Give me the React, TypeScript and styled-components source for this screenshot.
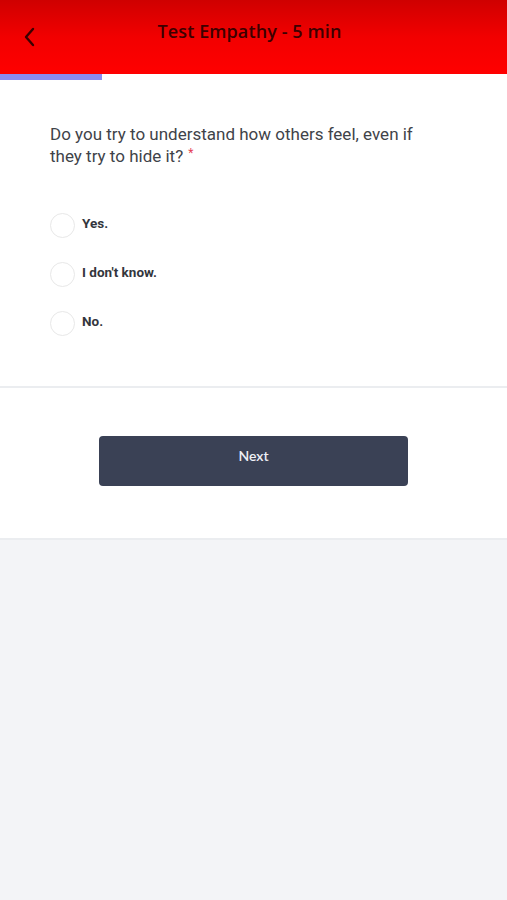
import styled, { createGlobalStyle } from "styled-components";

const GlobalStyle = createGlobalStyle`
  body {
    margin: 0;
    background: #f3f4f7;
    font-family: Roboto, "Liberation Sans", sans-serif;
  }
`;

const options = ["Yes.", "I don't know.", "No."];

export default function App() {
  return (
    <>
      <GlobalStyle />
      <Page>
        <Header>
          <BackButton aria-label="Back">
            <svg width="16" height="20" viewBox="0 0 16 20" fill="none">
              <path
                d="M11 2 L4 10 L11 18"
                stroke="#3a0000"
                strokeWidth="2.4"
                strokeLinecap="round"
                strokeLinejoin="round"
              />
            </svg>
          </BackButton>
          <Title>Test Empathy - 5 min</Title>
        </Header>
        <Progress>
          <ProgressFill style={{ width: "102px" }} />
        </Progress>
        <QuestionCard>
          <Question>
            Do you try to understand how others feel, even if they try to hide
            it?<Required>*</Required>
          </Question>
          <Options>
            {options.map((o) => (
              <Option key={o}>
                <Radio />
                <OptionLabel>{o}</OptionLabel>
              </Option>
            ))}
          </Options>
        </QuestionCard>
        <Footer>
          <NextButton>Next</NextButton>
        </Footer>
      </Page>
    </>
  );
}

const Page = styled.div`
  min-height: 900px;
  background: #f3f4f7;
`;

const Header = styled.header`
  position: relative;
  height: 74px;
  background: linear-gradient(180deg, #cf0000 0%, #f20000 50%, #ff0000 100%);
  display: flex;
  align-items: flex-start;
  justify-content: center;
`;

const BackButton = styled.button`
  position: absolute;
  left: 22px;
  top: 27px;
  border: 0;
  padding: 0;
  background: none;
  display: flex;
`;

const Title = styled.h1`
  margin: 19px 8px 0 0;
  font-family: "Open Sans", "Noto Sans", sans-serif;
  font-size: 18px;
  font-weight: 600;
  color: #3c0000;
  letter-spacing: 0.1px;
`;

const Progress = styled.div`
  height: 6px;
  background: #fff;
`;

const ProgressFill = styled.div`
  height: 100%;
  background: #8c8cf2;
`;

const QuestionCard = styled.section`
  background: #fff;
  padding: 43px 50px 50px;
  border-bottom: 2px solid #ebedf0;
`;

const Question = styled.p`
  margin: 0;
  max-width: 390px;
  font-size: 17px;
  line-height: 22px;
  color: #3f4349;
`;

const Required = styled.span`
  display: inline-block;
  margin-left: 5px;
  color: #e53e55;
  font-size: 12px;
  line-height: 12px;
  vertical-align: top;
  margin-top: 2px;
`;

const Options = styled.div`
  margin-top: 46px;
  display: flex;
  flex-direction: column;
  gap: 24px;
`;

const Option = styled.label`
  display: flex;
  align-items: center;
  gap: 7px;
`;

const Radio = styled.span`
  width: 23px;
  height: 23px;
  border-radius: 50%;
  border: 1px solid #e8e8e8;
  background: #fff;
  flex-shrink: 0;
`;

const OptionLabel = styled.span`
  font-size: 13.5px;
  font-weight: 700;
  color: #33363d;
  line-height: 16px;
  margin-top: -5px;
`;

const Footer = styled.div`
  background: #fff;
  padding: 48px 0 52px;
  display: flex;
  justify-content: center;
  border-bottom: 2px solid #ebedf0;
`;

const NextButton = styled.button`
  width: 309px;
  height: 50px;
  border: 0;
  border-radius: 4px;
  background: #3a4155;
  color: #eef0f5;
  font-family: Lato, "Liberation Sans", sans-serif;
  font-size: 14px;
  font-weight: 600;
  padding-bottom: 12px;
`;
